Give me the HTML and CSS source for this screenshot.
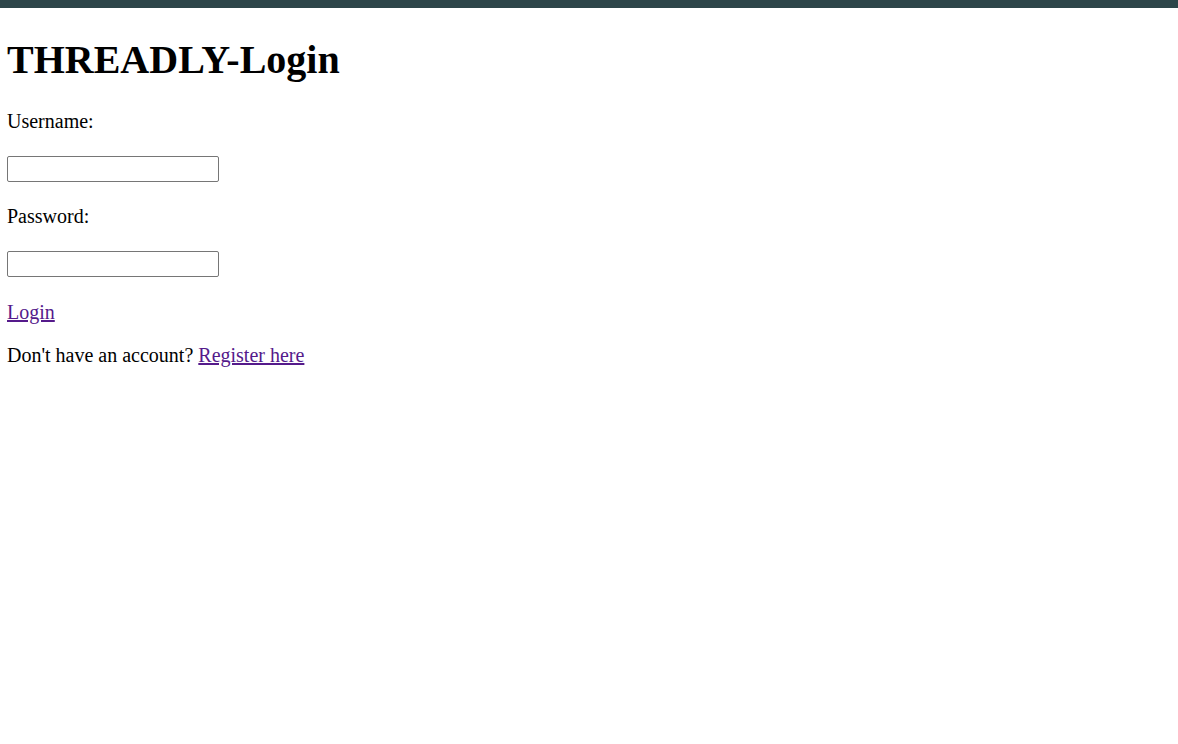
FILE: index.html
```html
<!DOCTYPE html>
<html lang="en">
<head>
<meta charset="utf-8">
<title>THREADLY - Login</title>
<link rel="stylesheet" href="styles.css">
</head>
<body>
<div class="topbar"></div>
<main class="page">
  <h1 class="title">THREADLY-Login</h1>
  <form class="login-form" action="#">
    <p class="label">Username:</p>
    <input class="field" type="text" name="username">
    <p class="label label-next">Password:</p>
    <input class="field" type="password" name="password">
    <p class="action"><a class="link" href="#">Login</a></p>
  </form>
  <p class="register">Don't have an account? <a class="link" href="#">Register here</a></p>
</main>
</body>
</html>
```
FILE: styles.css
```css
html, body {
  margin: 0;
  padding: 0;
  background: #ffffff;
}

body {
  font-family: "Liberation Serif", "Times New Roman", serif;
  font-size: 20px;
  color: #000000;
}

.topbar {
  height: 8px;
  background: #2d4549;
}

.page {
  padding: 0 7px;
  display: flex;
  flex-direction: column;
  align-items: flex-start;
}

.title {
  font-size: 40px;
  font-weight: bold;
  line-height: 46px;
  margin: 29px 0 27px;
}

.login-form {
  display: flex;
  flex-direction: column;
  align-items: flex-start;
  margin: 0;
}

.label {
  margin: 0;
  line-height: 23px;
}

.label-next {
  margin-top: 23px;
}

.field {
  box-sizing: border-box;
  width: 212px;
  height: 26px;
  margin: 23px 0 0;
  padding: 1px 3px;
  border: 1px solid #767676;
  border-radius: 2px;
  background: #ffffff;
  font-family: Arial, "Liberation Sans", sans-serif;
  font-size: 16px;
}

.action {
  margin: 24px 0 0;
  line-height: 23px;
}

.register {
  margin: 20px 0 0;
  line-height: 23px;
}

.link {
  color: #551a8b;
  text-decoration: underline;
}
```
